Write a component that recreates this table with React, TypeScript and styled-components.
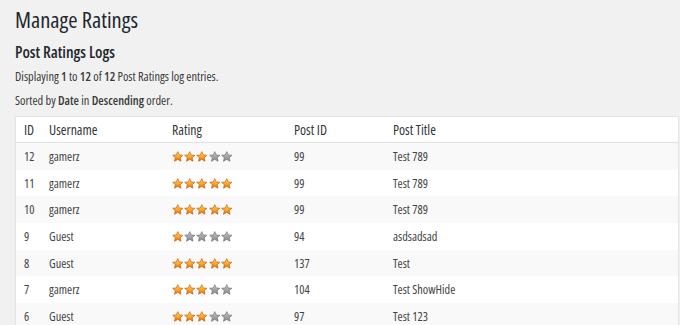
import React from "react";
import styled, { createGlobalStyle } from "styled-components";

const Global = createGlobalStyle`
  html, body { margin: 0; padding: 0; background: #f1f1f1; }
  body {
    font-family: "Open Sans", "Noto Sans", sans-serif;
    font-stretch: 80%;
    color: #444;
    font-size: 13px;
  }
`;

const Page = styled.div`
  padding: 0 1px 0 15px;
`;

const Title = styled.h1`
  margin: 0;
  padding: 5px 0 0;
  font-size: 22.5px;
  font-weight: 400;
  line-height: 29px;
  color: #23282d;
`;

const SubTitle = styled.h2`
  margin: 8px 0 0;
  font-size: 16px;
  font-weight: 600;
  line-height: 20px;
  color: #23282d;
`;

const Note = styled.p<{ $mt: number }>`
  margin: ${(p) => p.$mt}px 0 0;
  font-size: 12.4px;
  line-height: 16px;
  color: #3a3a3a;
  b { font-weight: 600; }
`;

const Table = styled.table`
  margin-top: 7px;
  width: 100%;
  border-collapse: collapse;
  table-layout: fixed;
  background: #fff;
  border: 1px solid #e5e5e5;
  box-shadow: 0 1px 1px rgba(0, 0, 0, 0.04);
`;

const Th = styled.th<{ $w?: number }>`
  ${(p) => (p.$w ? `width: ${p.$w}px;` : "")}
  text-align: left;
  font-weight: 400;
  font-size: 13.8px;
  color: #32373c;
  padding: 4px 8px;
  height: 17px;
  line-height: 17px;
  border-bottom: 1px solid #e1e1e1;
  white-space: nowrap;
`;

const Tr = styled.tr<{ $alt: boolean }>`
  background: ${(p) => (p.$alt ? "#f9f9f9" : "#fff")};
`;

const Td = styled.td`
  padding: 5px 8px 4.7px;
  height: 17px;
  line-height: 17px;
  font-size: 12.3px;
  color: #444;
  vertical-align: middle;
  white-space: nowrap;
`;

const Stars = styled.span`
  display: inline-flex;
  gap: 0.7px;
  vertical-align: middle;
  position: relative;
  top: -1px;
`;

const Star: React.FC<{ on: boolean; id: string }> = ({ on, id }) => (
  <svg width="11.5" height="11.5" viewBox="0 0 22 22">
    <defs>
      <linearGradient id={id} x1="0" y1="0" x2="0" y2="1">
        {on ? (
          <>
            <stop offset="0" stopColor="#ffe070" />
            <stop offset="0.5" stopColor="#fbaa2a" />
            <stop offset="1" stopColor="#e8680c" />
          </>
        ) : (
          <>
            <stop offset="0" stopColor="#d0d0d0" />
            <stop offset="0.5" stopColor="#a6a6a6" />
            <stop offset="1" stopColor="#868686" />
          </>
        )}
      </linearGradient>
    </defs>
    <path
      d="M11 1.2 L13.9 7.6 L20.8 8.2 L15.6 12.8 L17.2 19.6 L11 16 L4.8 19.6 L6.4 12.8 L1.2 8.2 L8.1 7.6 Z"
      fill={`url(#${id})`}
      stroke={on ? "#c45a0a" : "#6f6f6f"}
      strokeWidth="1.3"
      strokeLinejoin="round"
    />
  </svg>
);

const rows = [
  { id: 12, user: "gamerz", r: 3, pid: 99, title: "Test 789" },
  { id: 11, user: "gamerz", r: 5, pid: 99, title: "Test 789" },
  { id: 10, user: "gamerz", r: 5, pid: 99, title: "Test 789" },
  { id: 9, user: "Guest", r: 1, pid: 94, title: "asdsadsad" },
  { id: 8, user: "Guest", r: 5, pid: 137, title: "Test" },
  { id: 7, user: "gamerz", r: 3, pid: 104, title: "Test ShowHide" },
  { id: 6, user: "Guest", r: 3, pid: 97, title: "Test 123" },
];

export default function App() {
  return (
    <Page>
      <Global />
      <Title>Manage Ratings</Title>
      <SubTitle>Post Ratings Logs</SubTitle>
      <Note $mt={7}>
        Displaying <b>1</b> to <b>12</b> of <b>12</b> Post Ratings log entries.
      </Note>
      <Note $mt={8}>
        Sorted by <b>Date</b> in <b>Descending</b> order.
      </Note>
      <Table>
        <thead>
          <tr>
            <Th $w={9}>ID</Th>
            <Th $w={107}>Username</Th>
            <Th $w={106}>Rating</Th>
            <Th $w={83}>Post ID</Th>
            <Th>Post Title</Th>
          </tr>
        </thead>
        <tbody>
          {rows.map((row, i) => (
            <Tr key={row.id} $alt={i % 2 === 0}>
              <Td>{row.id}</Td>
              <Td>{row.user}</Td>
              <Td>
                <Stars>
                  {[0, 1, 2, 3, 4].map((k) => (
                    <Star key={k} on={k < row.r} id={`g${row.id}-${k}`} />
                  ))}
                </Stars>
              </Td>
              <Td>{row.pid}</Td>
              <Td>{row.title}</Td>
            </Tr>
          ))}
        </tbody>
      </Table>
    </Page>
  );
}
